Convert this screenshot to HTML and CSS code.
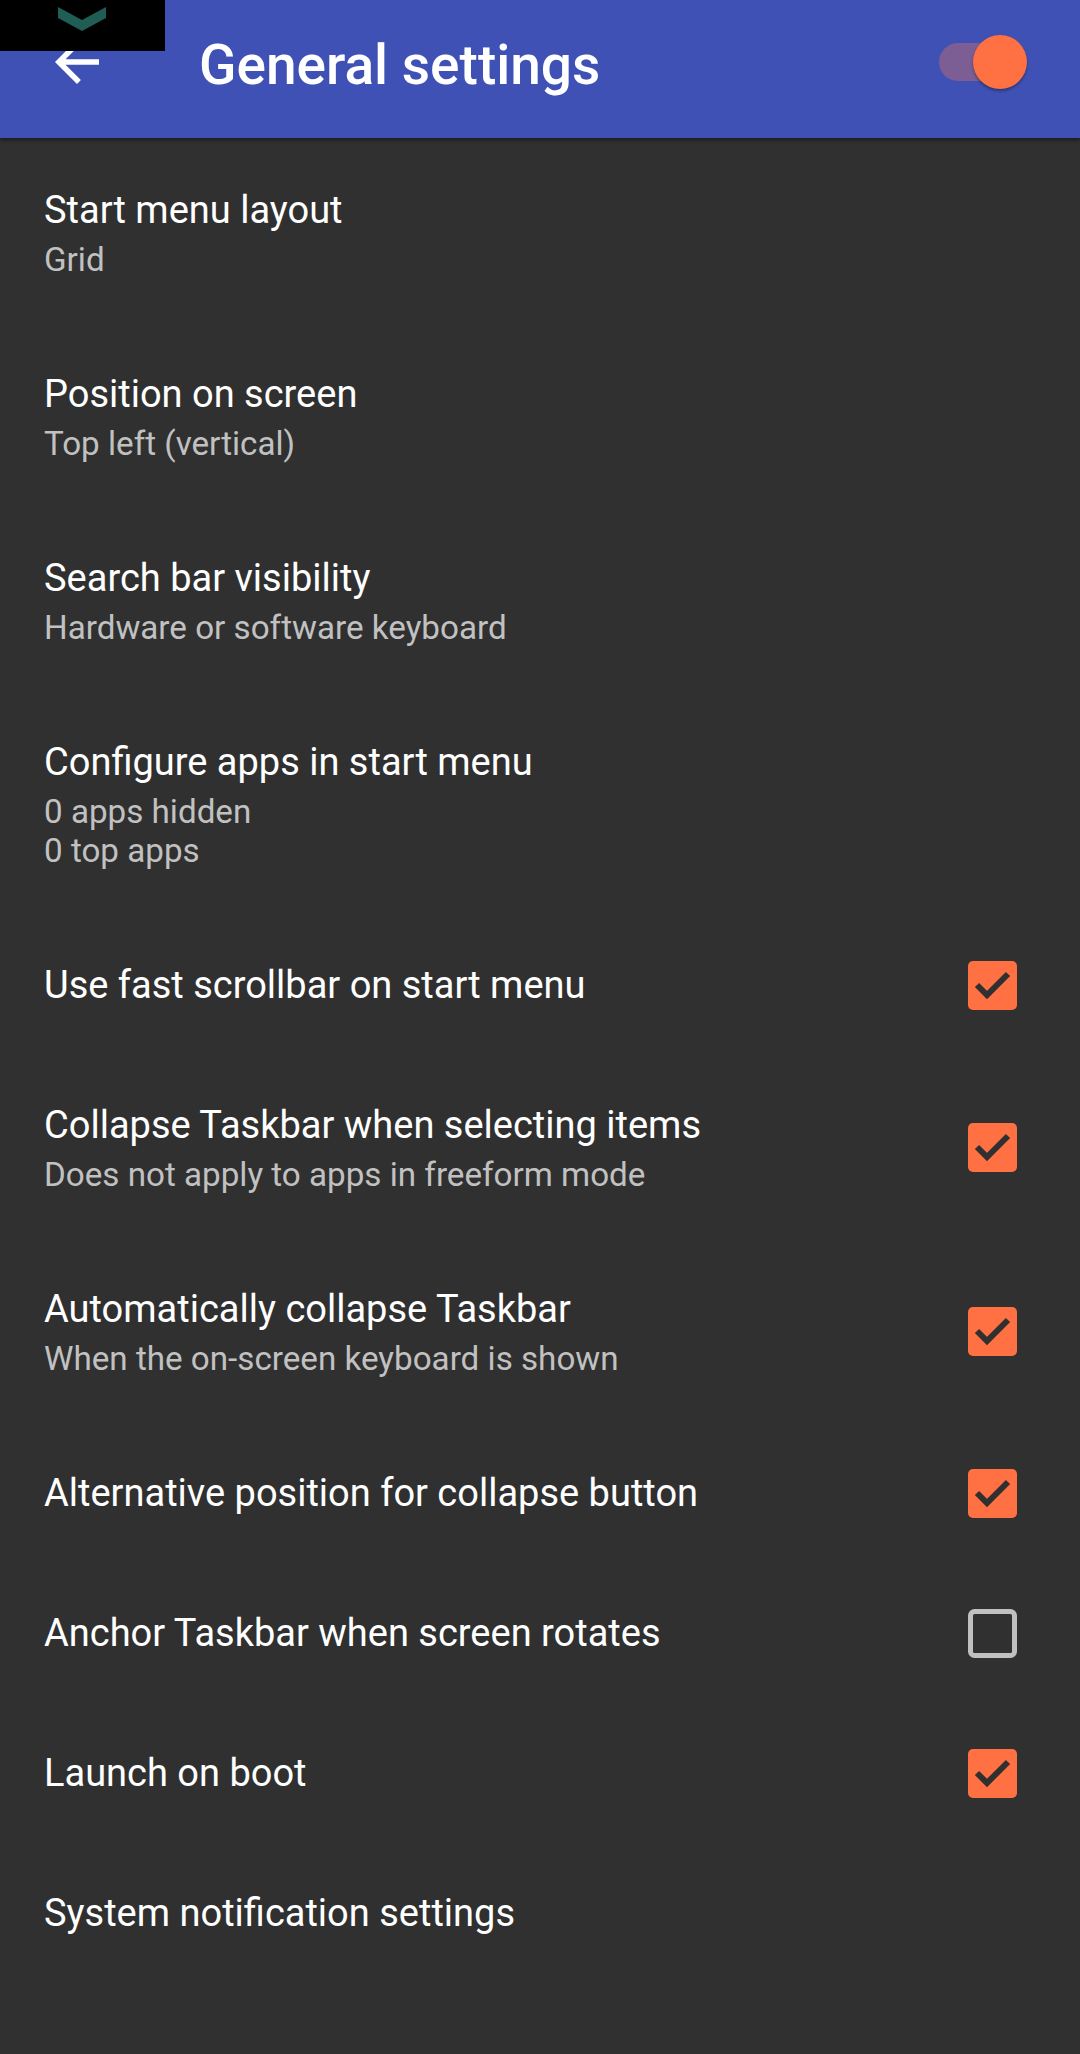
FILE: index.html
```html
<!DOCTYPE html>
<html lang="en">
<head>
<meta charset="utf-8">
<title>General settings</title>
<link rel="stylesheet" href="styles.css">
</head>
<body>
<div class="status-cover">
  <svg class="chev" width="48" height="26" viewBox="0 0 48 26"><polygon points="0,1 24,14 48,1 48,12 24,25 0,12" fill="#1f5d55"/></svg>
</div>
<header class="appbar">
  <svg class="back" width="66" height="66" viewBox="0 0 24 24"><path d="M20 11H7.83l5.59-5.59L12 4l-8 8 8 8 1.41-1.41L7.83 13H20v-2z" fill="#fff"/></svg>
  <h1 class="title">General settings</h1>
  <div class="switch"><span class="track"></span><span class="thumb"></span></div>
</header>
<main class="list">
  <div class="pref"><div class="text"><div class="ptitle">Start menu layout</div><div class="psum">Grid</div></div></div>
  <div class="pref"><div class="text"><div class="ptitle">Position on screen</div><div class="psum">Top left (vertical)</div></div></div>
  <div class="pref"><div class="text"><div class="ptitle">Search bar visibility</div><div class="psum">Hardware or software keyboard</div></div></div>
  <div class="pref"><div class="text"><div class="ptitle">Configure apps in start menu</div><div class="psum">0 apps hidden<br>0 top apps</div></div></div>
  <div class="pref"><div class="text"><div class="ptitle">Use fast scrollbar on start menu</div></div>
    <svg class="cb" width="49" height="49" viewBox="0 0 49 49"><rect width="49" height="49" rx="5" fill="#ff7043"/><polyline points="9,24 19,34 40,13" fill="none" stroke="#303030" stroke-width="6"/></svg></div>
  <div class="pref"><div class="text"><div class="ptitle">Collapse Taskbar when selecting items</div><div class="psum">Does not apply to apps in freeform mode</div></div>
    <svg class="cb" width="49" height="49" viewBox="0 0 49 49"><rect width="49" height="49" rx="5" fill="#ff7043"/><polyline points="9,24 19,34 40,13" fill="none" stroke="#303030" stroke-width="6"/></svg></div>
  <div class="pref"><div class="text"><div class="ptitle">Automatically collapse Taskbar</div><div class="psum">When the on-screen keyboard is shown</div></div>
    <svg class="cb" width="49" height="49" viewBox="0 0 49 49"><rect width="49" height="49" rx="5" fill="#ff7043"/><polyline points="9,24 19,34 40,13" fill="none" stroke="#303030" stroke-width="6"/></svg></div>
  <div class="pref"><div class="text"><div class="ptitle">Alternative position for collapse button</div></div>
    <svg class="cb" width="49" height="49" viewBox="0 0 49 49"><rect width="49" height="49" rx="5" fill="#ff7043"/><polyline points="9,24 19,34 40,13" fill="none" stroke="#303030" stroke-width="6"/></svg></div>
  <div class="pref"><div class="text"><div class="ptitle">Anchor Taskbar when screen rotates</div></div>
    <svg class="cb" width="49" height="49" viewBox="0 0 49 49"><rect x="2.5" y="2.5" width="44" height="44" rx="4" fill="none" stroke="#c0c0c0" stroke-width="5"/></svg></div>
  <div class="pref"><div class="text"><div class="ptitle">Launch on boot</div></div>
    <svg class="cb" width="49" height="49" viewBox="0 0 49 49"><rect width="49" height="49" rx="5" fill="#ff7043"/><polyline points="9,24 19,34 40,13" fill="none" stroke="#303030" stroke-width="6"/></svg></div>
  <div class="pref"><div class="text"><div class="ptitle">System notification settings</div></div></div>
</main>
</body>
</html>
```
FILE: styles.css
```css
html, body {
  margin: 0;
  padding: 0;
  background: #303030;
  font-family: Roboto, "Noto Sans", sans-serif;
}
body {
  min-height: 100vh;
  position: relative;
}
.status-cover {
  position: absolute;
  left: 0;
  top: 0;
  width: 165px;
  height: 51px;
  background: #000;
  z-index: 5;
}
.chev {
  position: absolute;
  left: 58px;
  top: 6px;
}
.appbar {
  height: 138px;
  box-sizing: border-box;
  background: #3f51b5;
  display: flex;
  align-items: center;
  padding: 0 53px 14px 44px;
  box-shadow: 0 2px 4px rgba(0, 0, 0, 0.45);
  position: relative;
  z-index: 2;
}
.back {
  flex: none;
}
.title {
  flex: 1;
  margin: 6px 0 0 89px;
  font-size: 55px;
  font-weight: 500;
  line-height: 1;
  color: #fff;
}
.switch {
  position: relative;
  width: 88px;
  height: 54px;
  flex: none;
}
.track {
  position: absolute;
  left: 0;
  top: 8px;
  width: 76px;
  height: 38px;
  border-radius: 19px;
  background: #7c5e95;
}
.thumb {
  position: absolute;
  right: 0;
  top: 0;
  width: 54px;
  height: 54px;
  border-radius: 50%;
  background: #ff7043;
  box-shadow: 0 2px 3px rgba(0, 0, 0, 0.35);
}
.list {
  display: flex;
  flex-direction: column;
}
.pref {
  display: flex;
  align-items: center;
  padding: 47px 63px 43px 44px;
}
.text {
  flex: 1;
}
.ptitle {
  font-size: 38px;
  line-height: 50px;
  color: #fff;
}
.psum {
  margin-top: 5px;
  font-size: 33.2px;
  line-height: 39px;
  color: #c1c1c1;
}
.cb {
  flex: none;
  display: block;
}
```
